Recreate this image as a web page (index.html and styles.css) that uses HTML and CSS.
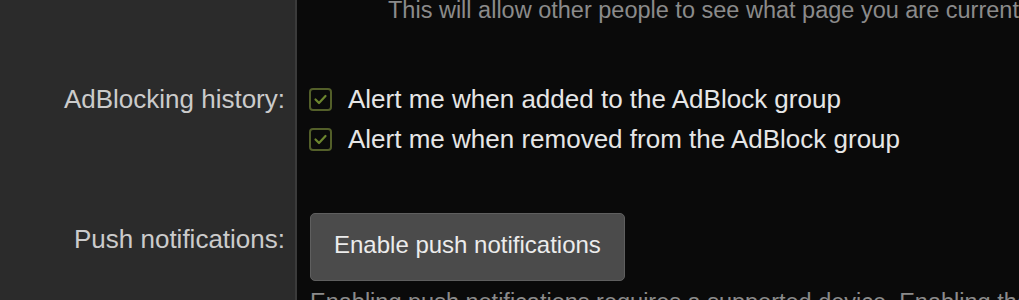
FILE: index.html
```html
<!DOCTYPE html>
<html>
<head>
<meta charset="utf-8">
<link rel="stylesheet" href="styles.css">
</head>
<body>
<div class="form">
  <div class="label label-first"></div>
  <div class="field field-first">
    <p class="desc desc-indent">This will allow other people to see what page you are currently viewing on the site.</p>
  </div>

  <div class="label label-ab">AdBlocking history:</div>
  <div class="field field-ab">
    <label class="check">
      <svg class="box" width="23" height="23" viewBox="0 0 23 23"><rect x="1" y="1" width="21" height="21" rx="3" fill="none" stroke="#535f29" stroke-width="2"/><path d="M6.5 11.5 L10 15 L16.5 8" fill="none" stroke="#6c852e" stroke-width="2.2" stroke-linecap="round" stroke-linejoin="round"/></svg>
      <span>Alert me when added to the AdBlock group</span>
    </label>
    <label class="check">
      <svg class="box" width="23" height="23" viewBox="0 0 23 23"><rect x="1" y="1" width="21" height="21" rx="3" fill="none" stroke="#535f29" stroke-width="2"/><path d="M6.5 11.5 L10 15 L16.5 8" fill="none" stroke="#6c852e" stroke-width="2.2" stroke-linecap="round" stroke-linejoin="round"/></svg>
      <span>Alert me when removed from the AdBlock group</span>
    </label>
  </div>

  <div class="label label-push">Push notifications:</div>
  <div class="field field-push">
    <button class="btn">Enable push notifications</button>
    <p class="desc desc-bottom">Enabling push notifications requires a supported device. Enabling them will send alerts to this browser.</p>
  </div>
</div>
</body>
</html>
```

FILE: styles.css
```css
html, body {
  margin: 0;
  padding: 0;
  background: #0a0a0a;
  overflow: hidden;
}
body {
  font-family: "Liberation Sans", Arial, Helvetica, sans-serif;
  height: 300px;
}
.form {
  display: grid;
  grid-template-columns: 295px 1fr;
  margin-top: -4px;
  min-height: 320px;
  background: linear-gradient(to right, #2b2b2b 0, #2b2b2b 295px, #3b3b3b 295px, #3b3b3b 297px, #0a0a0a 297px);
}
.label {
  text-align: right;
  padding-right: 10px;
  font-size: 26px;
  line-height: 40px;
  color: #cbcbcb;
  white-space: nowrap;
}
.field {
  padding-left: 15px;
  min-width: 0;
}
.desc {
  margin: 0;
  font-size: 23.5px;
  line-height: 28px;
  color: #8b8b8b;
  white-space: nowrap;
}
.desc-indent {
  margin-left: 78px;
}
.label-ab, .field-ab {
  padding-top: 55px;
}
.check {
  display: flex;
  align-items: center;
  gap: 16px;
  font-size: 26px;
  line-height: 40px;
  color: #e6e6e6;
  white-space: nowrap;
}
.box {
  display: block;
  margin-left: -1px;
  flex: none;
}
.field-push {
  padding-top: 54px;
}
.label-push {
  padding-top: 60px;
}
.btn {
  display: block;
  box-sizing: border-box;
  height: 68px;
  margin-left: 0;
  padding: 16px 23px 20px;
  font-family: inherit;
  font-size: 24px;
  line-height: 30px;
  color: #ececec;
  background: #4b4b4b;
  border: 1px solid #5f5f5f;
  border-radius: 5px;
}
.desc-bottom {
  margin-top: 7px;
  margin-left: 0;
}
```
